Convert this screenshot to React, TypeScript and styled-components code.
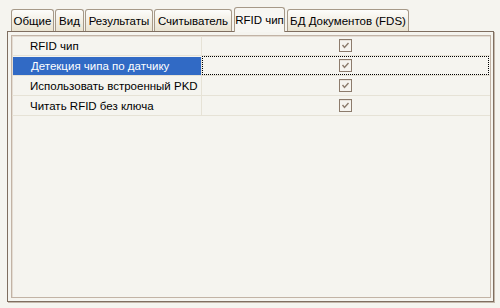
import React from 'react'
import styled, { createGlobalStyle } from 'styled-components'

const GlobalStyle = createGlobalStyle`
  html, body {
    margin: 0;
    padding: 0;
    background: #f5f4ef;
  }
  body {
    font-family: "Liberation Sans", Arial, sans-serif;
    font-size: 11.5px;
    color: #000;
  }
`

const Page = styled.div`
  width: 500px;
  height: 308px;
  padding: 7px 0 0 7px;
  box-sizing: border-box;
`

const TabStrip = styled.div`
  display: flex;
  align-items: flex-end;
  gap: 1px;
  height: 24px;
  padding-left: 4px;
`

const Tab = styled.div<{ $active?: boolean; $width: number }>`
  position: relative;
  z-index: ${p => (p.$active ? 2 : 1)};
  box-sizing: border-box;
  width: ${p => p.$width}px;
  height: ${p => (p.$active ? 25 : 22)}px;
  margin: ${p => (p.$active ? '0 1px -1px 1px' : '0')};
  padding-bottom: ${p => (p.$active ? 1 : 0)}px;
  display: flex;
  align-items: center;
  justify-content: center;
  white-space: nowrap;
  border: 1px solid #a69988;
  border-bottom: none;
  border-radius: 3px 3px 0 0;
  background: ${p =>
    p.$active
      ? '#f7f6f2'
      : 'linear-gradient(#fdfdfb 0%, #f4f1e8 45%, #e9e3d1 100%)'};
`

const Panel = styled.div`
  box-sizing: border-box;
  width: 487px;
  height: 271px;
  border: 1px solid #7f6e60;
  box-shadow: 1px 1px 0 #c4b8ab;
  background: #f5f4ef;
  padding: 3px 2px 3px 3px;
`

const Grid = styled.div`
  box-sizing: border-box;
  height: 100%;
  border: 1px solid #c2b3a5;
  box-shadow: inset 1px 1px 0 #e4ddd4;
  background: #f5f4ef;
`

const Row = styled.div`
  display: grid;
  grid-template-columns: 190px 1fr;
  height: 20px;
  border-bottom: 1px solid #e6e2d6;
  box-sizing: border-box;
`

const NameCell = styled.div<{ $selected?: boolean }>`
  display: flex;
  align-items: center;
  padding-left: 18px;
  border-right: 1px solid #e6e2d6;
  white-space: nowrap;
  color: ${p => (p.$selected ? '#fff' : '#000')};
  background: ${p => (p.$selected ? '#316ac5' : 'transparent')};
  margin: ${p => (p.$selected ? '1px 0 0 1px' : '0')};
`

const ValueCell = styled.div<{ $focused?: boolean }>`
  display: flex;
  align-items: center;
  justify-content: center;
  outline: ${p => (p.$focused ? '1px dotted #000' : 'none')};
  outline-offset: -1px;
  margin-right: 1px;
`

const CheckBox = () => (
  <svg width="13" height="13" viewBox="0 0 13 13">
    <rect x="0.5" y="0.5" width="12" height="12" fill="#f6f4ef" stroke="#8c7b6c" />
    <line x1="1" y1="1.5" x2="12" y2="1.5" stroke="#e8e2da" />
    <polyline points="3.5,6 5.5,8.5 9.5,4" fill="none" stroke="#8c7b6c" strokeWidth="1.4" />
  </svg>
)

const tabs = [
  { label: 'Общие', width: 43 },
  { label: 'Вид', width: 29 },
  { label: 'Результаты', width: 68 },
  { label: 'Считыватель', width: 78 },
  { label: 'RFID чип', width: 51, active: true },
  { label: 'БД Документов (FDS)', width: 122 },
]

const rows = [
  'RFID чип',
  'Детекция чипа по датчику',
  'Использовать встроенный PKD',
  'Читать RFID без ключа',
]

const App = () => {
  return (
    <Page>
      <GlobalStyle />
      <TabStrip>
        {tabs.map(t => (
          <Tab key={t.label} $width={t.width} $active={t.active}>
            {t.label}
          </Tab>
        ))}
      </TabStrip>
      <Panel>
        <Grid>
          {rows.map((r, i) => (
            <Row key={r}>
              <NameCell $selected={i === 1}>{r}</NameCell>
              <ValueCell $focused={i === 1}>
                <CheckBox />
              </ValueCell>
            </Row>
          ))}
        </Grid>
      </Panel>
    </Page>
  )
}

export default App
